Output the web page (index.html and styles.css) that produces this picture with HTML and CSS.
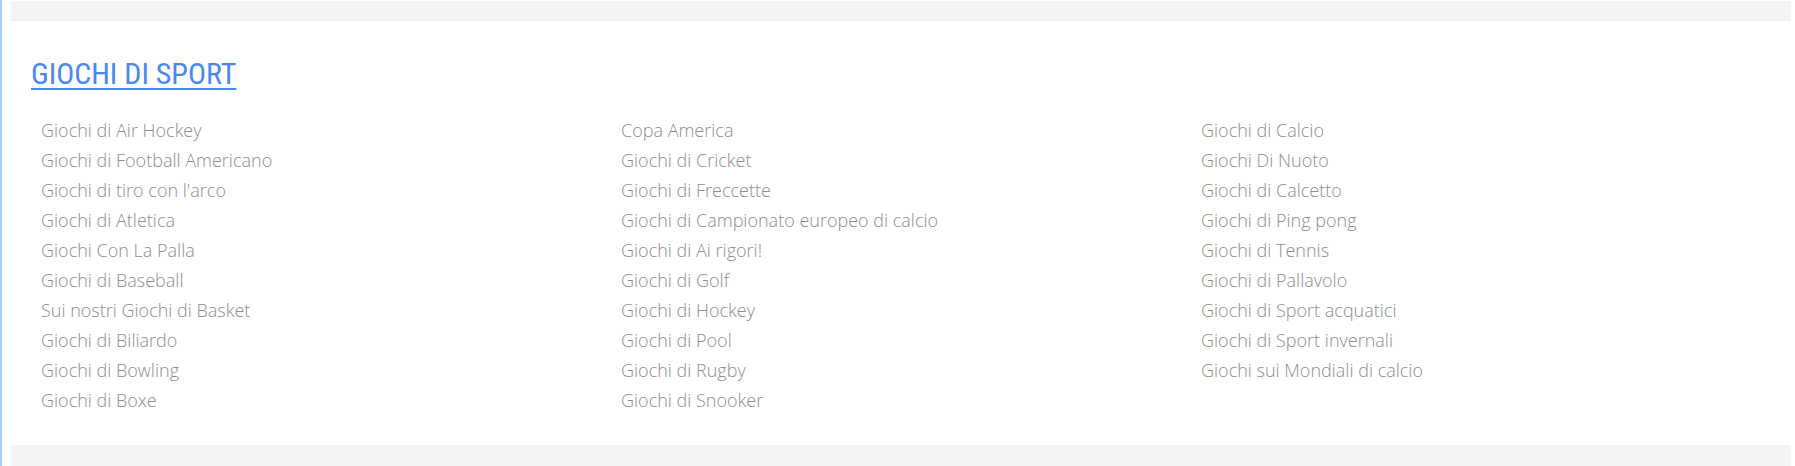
FILE: index.html
```html
<!DOCTYPE html>
<html lang="it">
<head>
<meta charset="utf-8">
<title>Giochi di Sport</title>
<link rel="stylesheet" href="styles.css">
</head>
<body>
<div class="page">
  <div class="bar bar-top"></div>
  <section class="category">
    <h2 class="category-title"><a href="#">GIOCHI DI SPORT</a></h2>
    <ul class="links">
      <li><a href="#">Giochi di Air Hockey</a></li>
      <li><a href="#">Giochi di Football Americano</a></li>
      <li><a href="#">Giochi di tiro con l'arco</a></li>
      <li><a href="#">Giochi di Atletica</a></li>
      <li><a href="#">Giochi Con La Palla</a></li>
      <li><a href="#">Giochi di Baseball</a></li>
      <li><a href="#">Sui nostri Giochi di Basket</a></li>
      <li><a href="#">Giochi di Biliardo</a></li>
      <li><a href="#">Giochi di Bowling</a></li>
      <li><a href="#">Giochi di Boxe</a></li>
      <li><a href="#">Copa America</a></li>
      <li><a href="#">Giochi di Cricket</a></li>
      <li><a href="#">Giochi di Freccette</a></li>
      <li><a href="#">Giochi di Campionato europeo di calcio</a></li>
      <li><a href="#">Giochi di Ai rigori!</a></li>
      <li><a href="#">Giochi di Golf</a></li>
      <li><a href="#">Giochi di Hockey</a></li>
      <li><a href="#">Giochi di Pool</a></li>
      <li><a href="#">Giochi di Rugby</a></li>
      <li><a href="#">Giochi di Snooker</a></li>
      <li><a href="#">Giochi di Calcio</a></li>
      <li><a href="#">Giochi Di Nuoto</a></li>
      <li><a href="#">Giochi di Calcetto</a></li>
      <li><a href="#">Giochi di Ping pong</a></li>
      <li><a href="#">Giochi di Tennis</a></li>
      <li><a href="#">Giochi di Pallavolo</a></li>
      <li><a href="#">Giochi di Sport acquatici</a></li>
      <li><a href="#">Giochi di Sport invernali</a></li>
      <li><a href="#">Giochi sui Mondiali di calcio</a></li>
    </ul>
  </section>
  <div class="bar bar-bottom"></div>
</div>
</body>
</html>
```
FILE: styles.css
```css
html, body {
  margin: 0;
  padding: 0;
  background: #ffffff;
}

body {
  font-family: "Open Sans", "Liberation Sans", sans-serif;
  min-height: 466px;
  border-left: 2px solid #a2d2fc;
  box-sizing: border-box;
}

.page {
  padding: 1px 4px 0 9px;
}

.bar {
  background: #f4f4f4;
}

.bar-top {
  height: 19px;
  border-bottom: 1px solid #eeeeee;
}

.bar-bottom {
  height: 22px;
}

.category {
  padding: 35px 20px 30px 20px;
}

.category-title {
  margin: 0 0 23px 0;
  font-family: "Roboto Condensed", "Roboto", sans-serif;
  font-weight: 400;
  font-size: 30px;
  line-height: 36px;
}

.category-title a {
  color: #4a87f4;
  text-decoration: underline;
  text-decoration-thickness: 2px;
  text-underline-offset: 4px;
}

.links {
  list-style: none;
  margin: 0;
  padding: 0;
  display: grid;
  grid-template-columns: repeat(3, 580px);
  grid-template-rows: repeat(10, 30px);
  grid-auto-flow: column;
}

.links li {
  padding-left: 10px;
  font-size: 18px;
  line-height: 30px;
  font-weight: 300;
  white-space: nowrap;
}

.links a {
  color: #8e8e8e;
  text-decoration: none;
}
```
